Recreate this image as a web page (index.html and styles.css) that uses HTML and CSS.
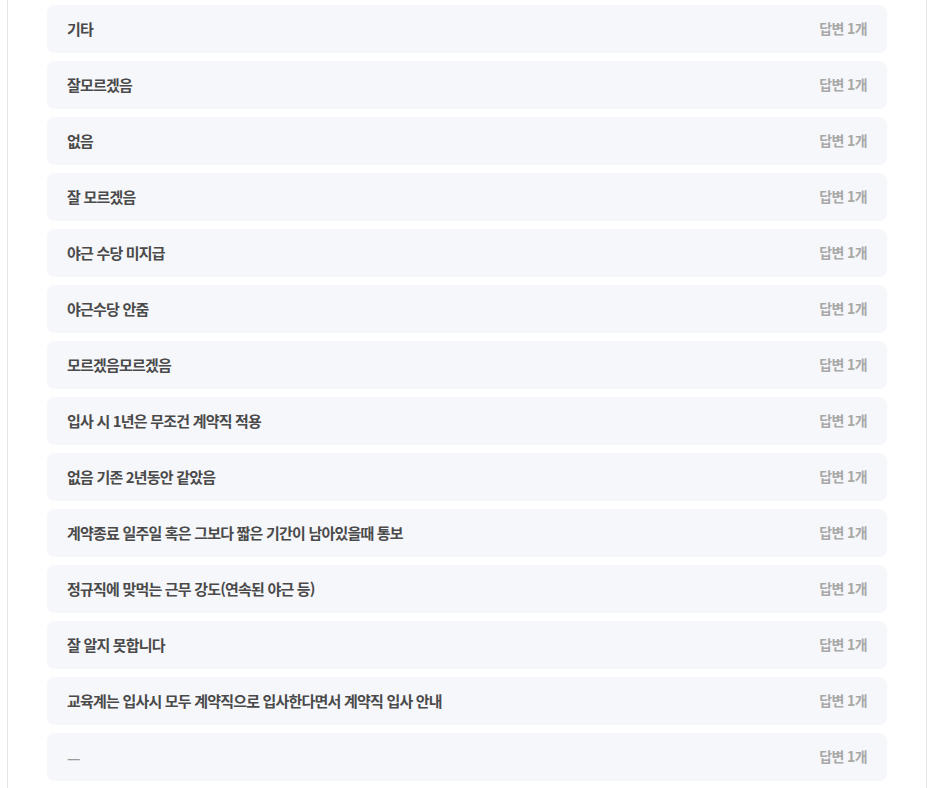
FILE: index.html
```html
<!DOCTYPE html>
<html lang="ko">
<head>
  <meta charset="utf-8">
  <title>기타 응답</title>
  <link rel="stylesheet" href="styles.css">
</head>
<body>
  <div class="panel">
    <ul class="answer-list">
      <li class="answer"><span class="answer-text">기타</span><span class="answer-count">답변 1개</span></li>
      <li class="answer"><span class="answer-text">잘모르겠음</span><span class="answer-count">답변 1개</span></li>
      <li class="answer"><span class="answer-text">없음</span><span class="answer-count">답변 1개</span></li>
      <li class="answer"><span class="answer-text">잘 모르겠음</span><span class="answer-count">답변 1개</span></li>
      <li class="answer"><span class="answer-text">야근 수당 미지급</span><span class="answer-count">답변 1개</span></li>
      <li class="answer"><span class="answer-text">야근수당 안줌</span><span class="answer-count">답변 1개</span></li>
      <li class="answer"><span class="answer-text">모르겠음모르겠음</span><span class="answer-count">답변 1개</span></li>
      <li class="answer"><span class="answer-text">입사 시 1년은 무조건 계약직 적용</span><span class="answer-count">답변 1개</span></li>
      <li class="answer"><span class="answer-text">없음 기존 2년동안 같았음</span><span class="answer-count">답변 1개</span></li>
      <li class="answer"><span class="answer-text">계약종료 일주일 혹은 그보다 짧은 기간이 남아있을때 통보</span><span class="answer-count">답변 1개</span></li>
      <li class="answer"><span class="answer-text">정규직에 맞먹는 근무 강도(연속된 야근 등)</span><span class="answer-count">답변 1개</span></li>
      <li class="answer"><span class="answer-text">잘 알지 못합니다</span><span class="answer-count">답변 1개</span></li>
      <li class="answer"><span class="answer-text">교육계는 입사시 모두 계약직으로 입사한다면서 계약직 입사 안내</span><span class="answer-count">답변 1개</span></li>
      <li class="answer"><span class="answer-text empty">—</span><span class="answer-count">답변 1개</span></li>
    </ul>
  </div>
</body>
</html>
```

FILE: styles.css
```css
* {
  margin: 0;
  padding: 0;
  box-sizing: border-box;
}

body {
  font-family: "Noto Sans CJK KR", "Noto Sans", sans-serif;
  background: #ffffff;
  color: #333333;
}

.panel {
  width: 920px;
  margin: 0 auto;
  padding: 5px 39px 20px;
  border-left: 1px solid #e6e6e6;
  border-right: 1px solid #e6e6e6;
  min-height: 788px;
}

.answer-list {
  list-style: none;
  display: flex;
  flex-direction: column;
  gap: 8px;
}

.answer {
  height: 48px;
  padding: 0 20px 2px;
  background: #f6f7fa;
  border-radius: 8px;
  display: flex;
  align-items: center;
  justify-content: space-between;
}

.answer-text {
  font-size: 15px;
  font-weight: 700;
  color: #4a4a4a;
  letter-spacing: -0.8px;
}

.answer-text.empty {
  color: #9a9a9a;
  font-weight: 500;
  letter-spacing: 0;
  padding-top: 2px;
}

.answer-count {
  font-size: 14px;
  font-weight: 700;
  color: #a8a8a8;
  letter-spacing: -0.6px;
}
```
